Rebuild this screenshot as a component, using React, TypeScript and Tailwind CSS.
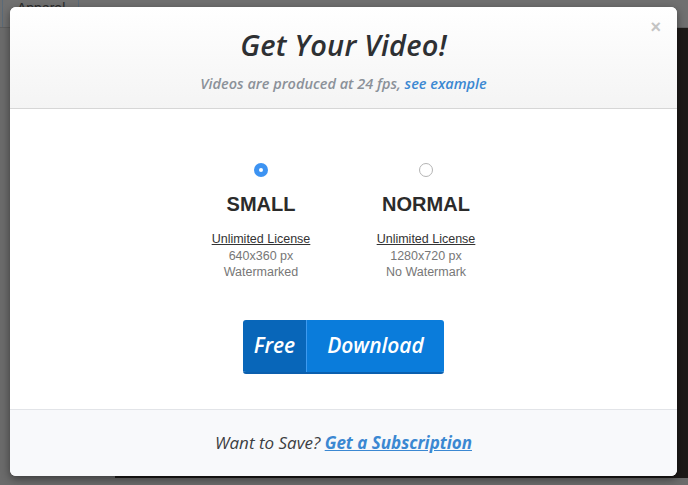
import React from 'react';

const sizes = [
  { id: 'small', title: 'SMALL', res: '640x360 px', mark: 'Watermarked', checked: true },
  { id: 'normal', title: 'NORMAL', res: '1280x720 px', mark: 'No Watermark', checked: false },
];

const humanist = "font-['Open_Sans',sans-serif] italic";

const App: React.FC = () => {
  return (
    <div className="relative h-[485px] w-full overflow-hidden bg-[#6b6b6b] font-['Liberation_Sans',Arial,sans-serif]">
      {/* page behind the overlay */}
      <div className="flex h-[28px] border-b border-[#5f5f5f] bg-[#707070]">
        <div className="ml-[2px] w-[77px] border-x border-[#5a6a78] pl-[14px] pt-[1px] text-[14px] leading-[14px] text-[#2a2a2a]">
          Apparel
        </div>
      </div>
      <div className="ml-[115px] h-[450px] bg-[#1d1a18]" />

      {/* modal */}
      <div className="absolute left-[10px] top-[7px] flex h-[469px] w-[667px] flex-col overflow-hidden rounded-[6px] bg-white shadow-[0_3px_8px_rgba(0,0,0,0.45)]">
        <div className="relative flex h-[102px] flex-col items-center border-b border-[#d6d6d6] bg-gradient-to-b from-white to-[#f4f4f4]">
          <button className="absolute right-[16px] top-[11px] text-[18px] font-bold leading-none text-[#c4c4c4]">×</button>
          <h1 className={`${humanist} mt-[20px] text-[29px] font-semibold leading-[36px] tracking-[0.2px] text-[#2e3033]`}>
            Get Your Video!
          </h1>
          <p className={`${humanist} mt-[10px] text-[14.5px] font-semibold text-[#8b9199]`}>
            Videos are produced at 24 fps, <a className="text-[#3b88d2]">see example</a>
          </p>
        </div>

        <div className="flex flex-1 flex-col items-center">
          <div className="mt-[54px] flex gap-[50px]">
            {sizes.map((s) => (
              <div key={s.id} className="flex w-[115px] flex-col items-center">
                {s.checked ? (
                  <span className="flex h-[14px] w-[14px] items-center justify-center rounded-full bg-[#3d93f2]">
                    <span className="h-[4px] w-[4px] rounded-full bg-white" />
                  </span>
                ) : (
                  <span className="h-[14px] w-[14px] rounded-full border border-[#b4b4b4] bg-white" />
                )}
                <div className="mt-[15px] text-[20px] font-bold leading-[24px] text-[#2b2b2b]">{s.title}</div>
                <div className="mt-[15px] text-[12.5px] leading-[16.5px] text-[#333] underline">Unlimited License</div>
                <div className="text-[12.5px] leading-[16.5px] text-[#777]">{s.res}</div>
                <div className="text-[12.5px] leading-[16.5px] text-[#777]">{s.mark}</div>
              </div>
            ))}
          </div>

          <button
            className={`${humanist} mt-[39px] flex h-[54px] w-[201px] overflow-hidden rounded-[3px] border-b-2 border-[#0b5fae] text-[21px] font-semibold text-white`}
          >
            <span className="flex w-[64px] items-center justify-center border-r border-[#3d9af0] bg-[#0866b9]">Free</span>
            <span className="flex flex-1 items-center justify-center bg-[#0a7cdb]">Download</span>
          </button>
        </div>

        <div className="flex h-[67px] items-center justify-center border-t border-[#e2e4e8] bg-[#f8f9fb]">
          <p className={`${humanist} text-[17px] text-[#3c3e42]`}>
            Want to Save? <a className="font-bold text-[#3b88d2] underline">Get a Subscription</a>
          </p>
        </div>
      </div>
    </div>
  );
};

export default App;
